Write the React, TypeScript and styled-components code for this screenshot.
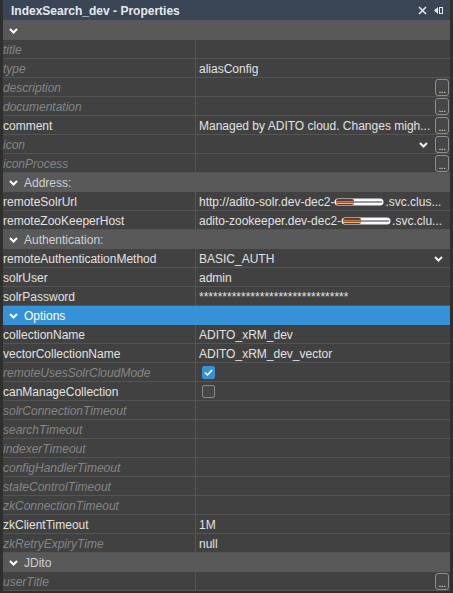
import React from "react";
import styled, { createGlobalStyle } from "styled-components";

const GlobalStyle = createGlobalStyle`
  html, body { margin: 0; padding: 0; background: #2f2f2f; }
  body { font-family: "Liberation Sans", Arial, sans-serif; }
`;

const Panel = styled.div`
  width: 453px;
  height: 593px;
  box-sizing: border-box;
  padding: 0 3px 3px 3px;
  background: #2f2f2f;
  display: flex;
  flex-direction: column;
  overflow: hidden;
`;

const TitleBar = styled.div`
  height: 20px;
  flex: 0 0 20px;
  background: #3a4555;
  display: flex;
  align-items: center;
  justify-content: space-between;
  padding: 1px 6px 0 8px;
  box-sizing: border-box;
`;

const Title = styled.span`
  font-size: 12px;
  font-weight: bold;
  color: #e4e9ef;
`;

const TitleIcons = styled.div`
  display: flex;
  align-items: center;
  gap: 7px;
`;

const SectionRow = styled.div<{ $selected?: boolean; $tall?: boolean }>`
  height: ${(p) => (p.$tall ? 20 : 19)}px;
  flex: 0 0 ${(p) => (p.$tall ? 20 : 19)}px;
  box-sizing: border-box;
  display: flex;
  align-items: center;
  gap: 6px;
  padding: 1px 0 0 6px;
  background: ${(p) => (p.$selected ? "#3592d6" : "#595959")};
  color: ${(p) => (p.$selected ? "#ffffff" : "#cdd2d8")};
  font-size: 12px;
`;

const Row = styled.div`
  height: 19px;
  flex: 0 0 19px;
  box-sizing: border-box;
  display: grid;
  grid-template-columns: 193px 1fr;
  background: #414141;
  border-bottom: 1px solid #545454;
  font-size: 12px;
`;

const Key = styled.div<{ $unset?: boolean }>`
  border-right: 1px solid #545454;
  padding-top: 1px;
  display: flex;
  align-items: center;
  overflow: hidden;
  white-space: nowrap;
  color: ${(p) => (p.$unset ? "#858585" : "#e2e2e2")};
  font-style: ${(p) => (p.$unset ? "italic" : "normal")};
`;

const Value = styled.div`
  display: flex;
  align-items: center;
  padding: 1px 1px 0 3px;
  min-width: 0;
  color: #e2e2e2;
`;

const ValueText = styled.span`
  flex: 1;
  min-width: 0;
  white-space: nowrap;
  overflow: hidden;
  display: flex;
  align-items: center;
`;

const DotsButton = styled.div`
  width: 12px;
  height: 15px;
  margin: -1px 0 0 3px;
  border: 1px solid #8e8e8e;
  border-radius: 3px;
  background: #474747;
  color: #e0e0e0;
  font-size: 10px;
  line-height: 19px;
  text-align: center;
  letter-spacing: -0.5px;
`;

const DropChevron = styled.span<{ $gap?: number }>`
  display: flex;
  align-items: center;
  margin-right: ${(p) => p.$gap ?? 0}px;
`;

const Check = styled.span<{ $checked?: boolean }>`
  width: 13px;
  height: 13px;
  margin-left: 3px;
  box-sizing: border-box;
  border-radius: 2px;
  display: flex;
  align-items: center;
  justify-content: center;
  background: ${(p) => (p.$checked ? "#3592d6" : "#474747")};
  border: 1px solid ${(p) => (p.$checked ? "#3592d6" : "#8a8a8a")};
`;

const Chevron = ({ color = "#ffffff" }: { color?: string }) => (
  <svg width="9" height="6" viewBox="0 0 9 6">
    <polyline points="1,1 4.5,4.5 8,1" fill="none" stroke={color} strokeWidth="2" />
  </svg>
);

const Redacted = () => (
  <svg width="50" height="8" viewBox="0 0 50 8" style={{ margin: "0 1px 0 0" }}>
    <rect x="0.5" y="0.5" width="49" height="7" rx="3.5" fill="#f4f4f4" />
    <rect x="2" y="1" width="18" height="6" rx="2" fill="#6e3a2c" />
    <rect x="2" y="3" width="18" height="1.5" fill="#c8783e" />
    <rect x="2" y="5" width="18" height="1" fill="#e3b37e" />
    <rect x="20" y="2" width="28" height="4" fill="#ffffff" />
    <rect x="20" y="3.5" width="28" height="1" fill="#30305a" />
  </svg>
);

type Prop = {
  k: string;
  v?: React.ReactNode;
  unset?: boolean;
  dots?: boolean;
  drop?: boolean;
  check?: boolean | null;
};

const PropRow = ({ k, v, unset, dots, drop, check }: Prop) => (
  <Row>
    <Key $unset={unset}>{k}</Key>
    <Value>
      {check !== undefined && check !== null ? (
        <Check $checked={check}>
          {check && (
            <svg width="9" height="7" viewBox="0 0 9 7">
              <polyline points="1,3.5 3.5,6 8,1" fill="none" stroke="#fff" strokeWidth="1.6" />
            </svg>
          )}
        </Check>
      ) : (
        <ValueText>{v}</ValueText>
      )}
      {drop && (
        <DropChevron $gap={dots ? 4 : 6}>
          <Chevron color="#f0f0f0" />
        </DropChevron>
      )}
      {dots && <DotsButton>...</DotsButton>}
    </Value>
  </Row>
);

const Section = ({ label, selected, tall }: { label?: string; selected?: boolean; tall?: boolean }) => (
  <SectionRow $selected={selected} $tall={tall}>
    <Chevron color="#ffffff" />
    {label && <span>{label}</span>}
  </SectionRow>
);

const pwd = "*".repeat(32);

export default function App() {
  return (
    <>
      <GlobalStyle />
      <Panel>
        <TitleBar>
          <Title>IndexSearch_dev - Properties</Title>
          <TitleIcons>
            <svg width="9" height="9" viewBox="0 0 9 9">
              <path d="M1 1 L8 8 M8 1 L1 8" stroke="#e8e8e8" strokeWidth="1.6" />
            </svg>
            <svg width="10" height="9" viewBox="0 0 10 9">
              <polygon points="0,4.5 4,1 4,8" fill="#e8e8e8" />
              <rect x="5.5" y="1.5" width="3" height="6" fill="none" stroke="#e8e8e8" strokeWidth="1" />
            </svg>
          </TitleIcons>
        </TitleBar>
        <Section tall />
        <PropRow k="title" unset />
        <PropRow k="type" unset v="aliasConfig" />
        <PropRow k="description" unset dots />
        <PropRow k="documentation" unset dots />
        <PropRow k="comment" v="Managed by ADITO cloud. Changes migh..." dots />
        <PropRow k="icon" unset drop dots />
        <PropRow k="iconProcess" unset dots />
        <Section label="Address:" />
        <PropRow
          k="remoteSolrUrl"
          v={
            <>
              http://adito-solr.dev-dec2-
              <Redacted />
              .svc.clus...
            </>
          }
        />
        <PropRow
          k="remoteZooKeeperHost"
          v={
            <>
              adito-zookeeper.dev-dec2-
              <Redacted />
              .svc.clu...
            </>
          }
        />
        <Section label="Authentication:" />
        <PropRow k="remoteAuthenticationMethod" v="BASIC_AUTH" drop />
        <PropRow k="solrUser" v="admin" />
        <PropRow k="solrPassword" v={pwd} />
        <Section label="Options" selected />
        <PropRow k="collectionName" v="ADITO_xRM_dev" />
        <PropRow k="vectorCollectionName" v="ADITO_xRM_dev_vector" />
        <PropRow k="remoteUsesSolrCloudMode" unset check={true} />
        <PropRow k="canManageCollection" check={false} />
        <PropRow k="solrConnectionTimeout" unset />
        <PropRow k="searchTimeout" unset />
        <PropRow k="indexerTimeout" unset />
        <PropRow k="configHandlerTimeout" unset />
        <PropRow k="stateControlTimeout" unset />
        <PropRow k="zkConnectionTimeout" unset />
        <PropRow k="zkClientTimeout" v="1M" />
        <PropRow k="zkRetryExpiryTime" unset v="null" />
        <Section label="JDito" />
        <PropRow k="userTitle" unset dots />
      </Panel>
    </>
  );
}
